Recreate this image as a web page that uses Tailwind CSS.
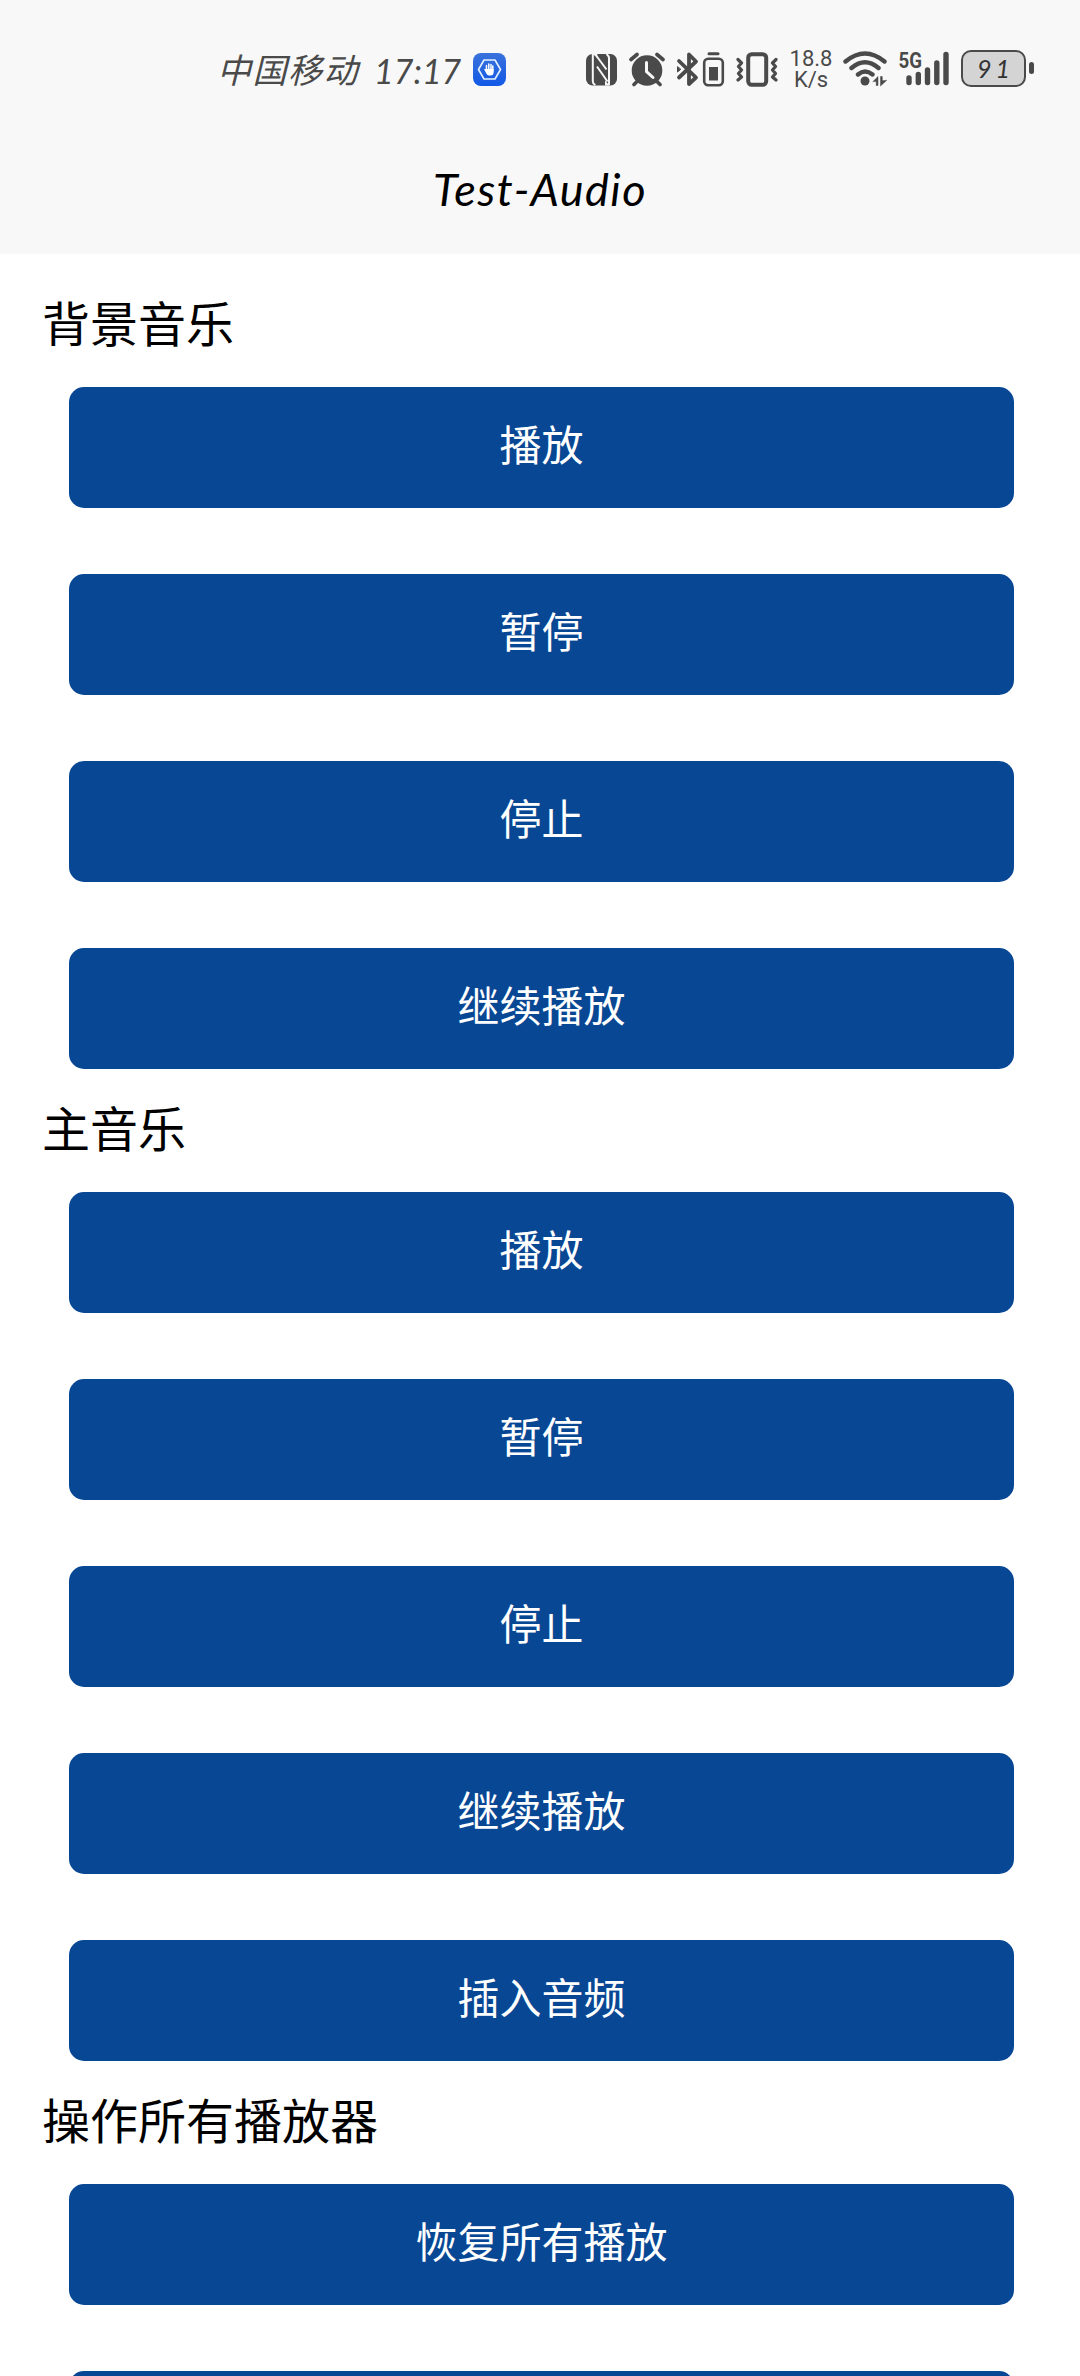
<!DOCTYPE html>
<html lang="zh-CN">
<head>
    <meta charset="UTF-8">
    <meta name="viewport" content="width=device-width, initial-scale=1.0">
    <title>Test-Audio</title>
    <script src="https://cdn.jsdelivr.net/npm/@tailwindcss/browser@4"></script>
</head>
<body class="bg-white text-black font-['Noto_Sans_CJK_SC',sans-serif] h-[2376px] overflow-hidden">

    <header class="h-[254px] bg-[#f8f8f8]">
        <!-- Status bar -->
        <div class="flex items-start pt-12 pl-[217px] h-[138px] text-[#4a4a4a]">
            <span class="w-[157px] text-[34px] leading-[42px] italic tracking-[1.5px] whitespace-nowrap">中国移动</span>
            <span class="w-[99px] font-['Lato',sans-serif] text-[34px] leading-[46px] italic whitespace-nowrap">17:17</span>

            <svg class="w-[33px] h-[42px] shrink-0" viewBox="473 48 33 42" fill="none">
                <defs>
                    <linearGradient id="hand" x1="0" y1="0" x2="0" y2="1">
                        <stop offset="0" stop-color="#3a72dc"/>
                        <stop offset="1" stop-color="#1259e6"/>
                    </linearGradient>
                </defs>
                <rect x="473" y="53" width="33" height="33" rx="8" fill="url(#hand)"/>
                <path d="M484 60h11l5.500 9.500-5.500 9.500h-11l-5.500-9.500z" stroke="#e4f2ff" stroke-width="1.600" stroke-linejoin="round"/>
                <path d="M486.500 70V65.500M488.800 70V64M491 70V64.500M492.800 71V66M485 69.500l2 3" stroke="#fff" stroke-width="1.500" stroke-linecap="round"/>
                <path d="M485.800 69h7.800v3q0 3.500-3 3.500h-1.500q-2 0-3.300-3z" fill="#fff"/>
            </svg>

            <!-- NFC -->
            <svg class="w-[31px] h-[42px] ml-[80px] shrink-0" viewBox="586 48 31 42" fill="none">
                <rect x="586" y="54" width="31" height="31.500" rx="6.500" fill="#4a4a4a"/>
                <path d="M592.800 54v27.500q0 2 2.500 3.500M596.500 56L606.500 69.500M597 66.500L607.500 81.500M609 85V58q0-2-2.500-4" stroke="#f8f8f8" stroke-width="2"/>
                <path d="M592.800 54h4.500v4zM609.500 85.500h-4.500v-5z" fill="#f8f8f8"/>
            </svg>

            <!-- Alarm -->
            <svg class="w-[36px] h-[42px] ml-[12px] shrink-0" viewBox="629 48 36 42" fill="none" stroke="#4a4a4a" stroke-linecap="round">
                <circle cx="647" cy="70.500" r="15.300" fill="#4a4a4a" stroke="none"/>
                <path d="M631 59.500l6-5M663 59.500l-6-5M634 84.500l4-4M660 84.500l-4-4" stroke-width="3.600"/>
                <path d="M646.500 62.500V71.500L653 77.500" stroke="#f8f8f8" stroke-width="3"/>
            </svg>

            <!-- Bluetooth and device battery -->
            <svg class="w-[49px] h-[42px] ml-[11px] shrink-0" viewBox="676 48 49 42" fill="none" stroke="#4a4a4a" stroke-linejoin="round" stroke-linecap="round">
                <path d="M679 61L696 77.500L689 84V54.500L696 61.500L679 77.500" stroke-width="3.800"/>
                <path d="M677.500 67v5l3-2.500z" fill="#4a4a4a" stroke-width="1"/>
                <path d="M709 53.700h9" stroke-width="3"/>
                <rect x="704.200" y="58.700" width="18.600" height="26.600" rx="4" stroke-width="2.600"/>
                <rect x="709" y="67" width="9" height="13.500" fill="#4a4a4a" stroke="none"/>
            </svg>

            <!-- Vibrate -->
            <svg class="w-[42px] h-[42px] ml-[11px] shrink-0" viewBox="736 48 42 42" fill="none" stroke="#4a4a4a" stroke-linejoin="round" stroke-linecap="round">
                <rect x="748.200" y="54.200" width="18" height="30.600" rx="3.500" stroke-width="4"/>
                <path d="M738 59.500l3.500 3.500-3 3.500 3 3.500-3 3.500 3 3.500-3.500 3M776 59.500l-3.500 3.500 3 3.500-3 3.500 3 3.500-3 3.500 3.500 3" stroke-width="3.200"/>
            </svg>

            <div class="w-[42px] ml-[12px] mr-[-1px] flex flex-col items-center font-['Roboto',sans-serif] text-[22px] leading-[21px] shrink-0">
                <span>18.8</span>
                <span>K/s</span>
            </div>

            <!-- Wifi -->
            <svg class="w-[44px] h-[42px] ml-[12px] shrink-0" viewBox="842 48 44 42" fill="none" stroke="#4a4a4a" stroke-linecap="round">
                <path d="M844.500 61.500Q864 45.500 883.500 61.500M850.500 68Q864 56.500 877.500 68M857 74.500Q864 68.500 871.500 74.500" stroke-width="4.400"/>
                <circle cx="864" cy="81" r="4.500" fill="#4a4a4a" stroke="none"/>
                <path d="M872 81.500l5-5v9h-1.800v-4zM885.500 80.500l-6 5.500v-9.500h1.800v4z" fill="#4a4a4a" stroke="#4a4a4a" stroke-width="0.500"/>
            </svg>

            <!-- 5G signal -->
            <svg class="w-[52px] h-[42px] ml-[11px] shrink-0" viewBox="897 48 52 42" fill="none" stroke="#4a4a4a" stroke-width="5.400" stroke-linecap="round">
                <path d="M908 78v4.500M917.300 74.500v8M926.500 70v12.500M935.800 63v19.500M945 54.500v28"/>
                <text x="897.500" y="67.500" textLength="23.500" lengthAdjust="spacingAndGlyphs" class="font-['Roboto',sans-serif] text-[22px] font-bold" fill="#4a4a4a" stroke="none">5G</text>
            </svg>

            <!-- Battery -->
            <div class="w-[65px] h-[37px] mt-[2px] ml-[11px] rounded-[10px] border-[2.5px] border-[#4a4a4a] bg-[#d4d4d4] flex items-center justify-center font-['Lato',sans-serif] italic text-[25px] leading-none tracking-[4px] pl-1 text-[#333] shrink-0">91</div>
            <div class="w-[5px] h-[12px] mt-[14px] ml-[3px] rounded-sm bg-[#4a4a4a] shrink-0"></div>
        </div>

        <h1 class="text-center font-['Lato',sans-serif] italic text-[45px] leading-[102px] tracking-[1.5px]">Test-Audio</h1>
    </header>

    <main class="pt-[10px]">
        <section>
            <h2 class="h-[123px] pl-[42px] text-[48px] leading-[115px]">背景音乐</h2>
            <div class="flex flex-col gap-[66px] pl-[69px] pr-[66px] text-[42px] leading-[111px] text-white">
                <button class="h-[121px] pb-2.5 rounded-[15px] bg-[#084794]">播放</button>
                <button class="h-[121px] pb-2.5 rounded-[15px] bg-[#084794]">暂停</button>
                <button class="h-[121px] pb-2.5 rounded-[15px] bg-[#084794]">停止</button>
                <button class="h-[121px] pb-2.5 rounded-[15px] bg-[#084794]">继续播放</button>
            </div>
        </section>

        <section>
            <h2 class="h-[123px] pl-[42px] text-[48px] leading-[115px]">主音乐</h2>
            <div class="flex flex-col gap-[66px] pl-[69px] pr-[66px] text-[42px] leading-[111px] text-white">
                <button class="h-[121px] pb-2.5 rounded-[15px] bg-[#084794]">播放</button>
                <button class="h-[121px] pb-2.5 rounded-[15px] bg-[#084794]">暂停</button>
                <button class="h-[121px] pb-2.5 rounded-[15px] bg-[#084794]">停止</button>
                <button class="h-[121px] pb-2.5 rounded-[15px] bg-[#084794]">继续播放</button>
                <button class="h-[121px] pb-2.5 rounded-[15px] bg-[#084794]">插入音频</button>
            </div>
        </section>

        <section>
            <h2 class="h-[123px] pl-[42px] text-[48px] leading-[115px]">操作所有播放器</h2>
            <div class="flex flex-col gap-[66px] pl-[69px] pr-[66px] text-[42px] leading-[111px] text-white">
                <button class="h-[121px] pb-2.5 rounded-[15px] bg-[#084794]">恢复所有播放</button>
                <button class="h-[121px] pb-2.5 rounded-[15px] bg-[#084794]"></button>
            </div>
        </section>
    </main>

</body>
</html>
